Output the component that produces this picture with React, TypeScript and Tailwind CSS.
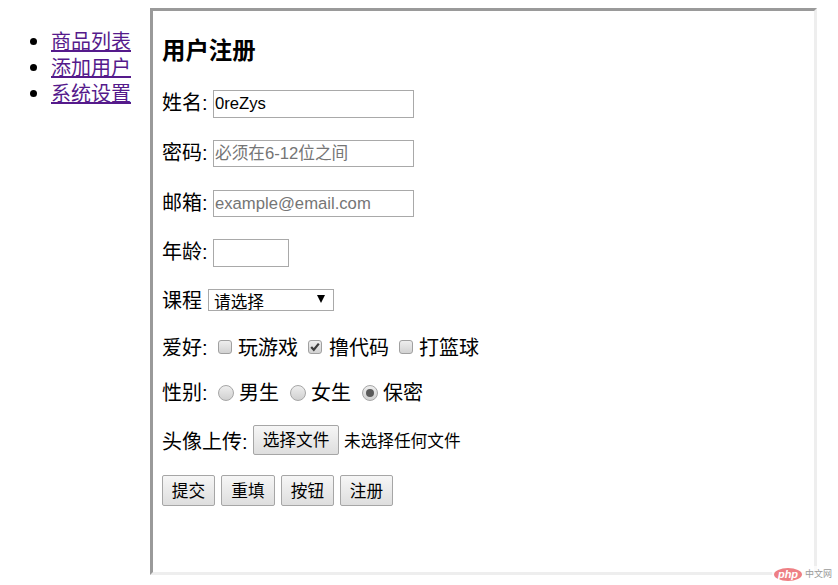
import React from "react";

const cjk = "font-['Liberation_Sans','Noto_Sans_CJK_SC',sans-serif]";

function Check({ checked }: { checked?: boolean }) {
  return (
    <span className="relative flex h-[14px] w-[14px] shrink-0 items-center justify-center rounded-[3px] border border-[#a0a0a0] bg-gradient-to-b from-[#eeeeee] to-[#d2d2d2]">
      {checked && (
        <svg width="10" height="10" viewBox="0 0 10 10">
          <path d="M1.2 5 L3.8 7.8 L8.8 1.6" fill="none" stroke="#3c3c3c" strokeWidth="2.2" />
        </svg>
      )}
    </span>
  );
}

function Radio({ checked }: { checked?: boolean }) {
  return (
    <span className="flex h-[16px] w-[16px] shrink-0 items-center justify-center rounded-full border border-[#a6a6a6] bg-gradient-to-b from-[#eeeeee] to-[#d0d0d0]">
      {checked && <span className="h-[8px] w-[8px] rounded-full bg-[#5a5a5a]" />}
    </span>
  );
}

function Btn({ children, w, h }: { children: React.ReactNode; w: string; h: string }) {
  return (
    <button className={`${w} ${h} flex shrink-0 items-center justify-center rounded-[2px] border border-[#a6a6a6] bg-gradient-to-b from-[#f6f6f6] to-[#dedede] pt-[3px] text-[16.67px] leading-none text-black`}>
      {children}
    </button>
  );
}

function NavItem({ label }: { label: string }) {
  return (
    <li className="flex h-[26px] items-center">
      <span className="-mt-[2px] mr-[14px] h-[7px] w-[7px] shrink-0 rounded-full bg-black" />
      <a href="#" className="text-[#551a8b] underline">{label}</a>
    </li>
  );
}

export default function App() {
  return (
    <div className={`${cjk} flex h-[585px] w-[838px] bg-white pt-2 text-[20px] text-black relative overflow-hidden`}>
      <ul className="w-[150px] shrink-0 list-none pl-[30px] pt-[21px] leading-[26px]">
        <NavItem label="商品列表" />
        <NavItem label="添加用户" />
        <NavItem label="系统设置" />
      </ul>

      <div className="h-[567px] w-[667px] border-[3px] border-t-[#9a9a9a] border-l-[#9a9a9a] border-r-[#eeeeee] border-b-[#eeeeee] pl-[9px]">
        <h3 className="mt-[26px] h-[28px] text-[23.4px] font-bold leading-[28px]">用户注册</h3>

        <div className="mt-[25px] flex h-[28px] items-center">
          <span className="w-[51px] pb-[3px]">姓名:</span>
          <input defaultValue="0reZys" className="h-[28px] w-[201px] border border-[#a9a9a9] px-[1px] text-[16.67px] outline-none" />
        </div>
        <div className="mt-[22px] flex h-[27px] items-center">
          <span className="w-[51px] pb-[2px]">密码:</span>
          <input placeholder="必须在6-12位之间" className="h-[27px] w-[201px] border border-[#a9a9a9] px-[1px] text-[16.67px] outline-none placeholder:text-[#757575]" />
        </div>
        <div className="mt-[23px] flex h-[27px] items-center">
          <span className="w-[51px] pb-[2px]">邮箱:</span>
          <input placeholder="example@email.com" className="h-[27px] w-[201px] border border-[#a9a9a9] px-[1px] text-[16.67px] outline-none placeholder:text-[#757575]" />
        </div>
        <div className="mt-[22px] flex h-[28px] items-center">
          <span className="w-[51px] pb-[2px]">年龄:</span>
          <input className="h-[28px] w-[76px] border border-[#a9a9a9] px-[1px] text-[16.67px] outline-none" />
        </div>
        <div className="mt-[22px] flex h-[22px] items-center">
          <span className="w-[46px] pt-[2px]">课程</span>
          <div className="relative h-[22px] w-[126px] overflow-hidden border border-[#a9a9a9] pl-[5px] text-[16.67px] leading-[25px]">
            请选择
            <span className="absolute right-[8px] top-[5px] h-0 w-0 border-x-[4px] border-t-[8px] border-x-transparent border-t-black" />
          </div>
        </div>

        <div className="mt-[23px] flex h-[26px] items-center">
          <span className="w-[56px] pt-[2px]">爱好:</span>
          <Check />
          <span className="ml-[6px] w-[60px] pt-[2px]">玩游戏</span>
          <span className="ml-[10px]"><Check checked /></span>
          <span className="ml-[7px] w-[60px] pt-[2px]">撸代码</span>
          <span className="ml-[10px]"><Check /></span>
          <span className="ml-[6px] pt-[2px]">打篮球</span>
        </div>

        <div className="mt-[20px] flex h-[26px] items-center">
          <span className="w-[56px]">性别:</span>
          <Radio />
          <span className="ml-[5px] w-[40px]">男生</span>
          <span className="ml-[11px]"><Radio /></span>
          <span className="ml-[5px] w-[40px]">女生</span>
          <span className="ml-[11px]"><Radio checked /></span>
          <span className="ml-[5px]">保密</span>
        </div>

        <div className="mt-[19px] flex h-[30px] items-center">
          <span className="w-[91px] pt-[3px]">头像上传:</span>
          <Btn w="w-[86px]" h="h-[30px]">选择文件</Btn>
          <span className="ml-[5px] pt-[2px] text-[16.67px]">未选择任何文件</span>
        </div>

        <div className="mt-[20px] flex gap-[6px]">
          <Btn w="w-[53px]" h="h-[31px]">提交</Btn>
          <Btn w="w-[54px]" h="h-[31px]">重填</Btn>
          <Btn w="w-[53px]" h="h-[31px]">按钮</Btn>
          <Btn w="w-[53px]" h="h-[31px]">注册</Btn>
        </div>
      </div>

      <div className="absolute left-[772px] top-[566px] flex h-[17px] w-[64px] items-center bg-white/70">
        <span className="ml-[2px] flex h-[13px] w-[28px] items-center justify-center rounded-[50%] bg-[#ee7f84] text-[11px] font-bold italic leading-none text-white">php</span>
        <span className="ml-[3px] text-[9px] leading-none text-[#9a9a9a]">中文网</span>
      </div>
    </div>
  );
}
